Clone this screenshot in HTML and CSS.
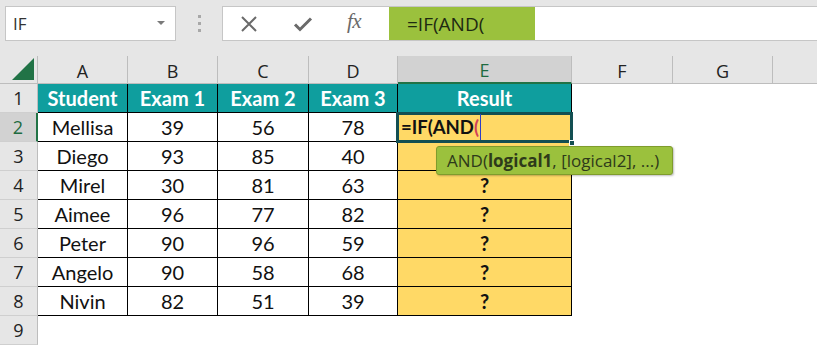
FILE: index.html
```html
<!DOCTYPE html>
<html>
<head>
<meta charset="utf-8">
<link rel="stylesheet" href="styles.css">
</head>
<body>
<div class="topbar">
  <div class="namebox"><span class="nb-text">IF</span><span class="nb-arrow"></span></div>
  <div class="dots"><i></i><i></i><i></i></div>
  <div class="fbar">
    <div class="fbtns">
      <svg class="ic-x" width="18" height="16" viewBox="0 0 18 16"><path d="M2 1 L16 15 M16 1 L2 15" stroke="#6a6a6a" stroke-width="2" fill="none"/></svg>
      <svg class="ic-check" width="20" height="16" viewBox="0 0 20 16"><path d="M2 8.5 L7 13.5 L18 2.5" stroke="#6a6a6a" stroke-width="3" fill="none"/></svg>
      <span class="ic-fx">fx</span>
    </div>
    <div class="fformula">=IF(AND(</div>
  </div>
</div>
<div class="sheet">
  <div class="ch corner"><svg width="22" height="22" viewBox="0 0 22 22"><path d="M22 0 L22 22 L0 22 Z" fill="#217346"/></svg></div>
  <div class="ch">A</div><div class="ch">B</div><div class="ch">C</div><div class="ch">D</div><div class="ch sel">E</div><div class="ch">F</div><div class="ch">G</div><div class="ch last"></div>

  <div class="rh">1</div>
  <div class="c hd">Student</div><div class="c hd">Exam 1</div><div class="c hd">Exam 2</div><div class="c hd">Exam 3</div><div class="c hd">Result</div><div class="e"></div><div class="e"></div><div class="e"></div>

  <div class="rh sel">2</div>
  <div class="c">Mellisa</div><div class="c">39</div><div class="c">56</div><div class="c">78</div><div class="c y active"><span class="ftext">=IF(AND<span class="paren">(</span></span><span class="caret"></span><span class="handle"></span></div><div class="e"></div><div class="e"></div><div class="e"></div>

  <div class="rh">3</div>
  <div class="c">Diego</div><div class="c">93</div><div class="c">85</div><div class="c">40</div><div class="c y"></div><div class="e"></div><div class="e"></div><div class="e"></div>

  <div class="rh">4</div>
  <div class="c">Mirel</div><div class="c">30</div><div class="c">81</div><div class="c">63</div><div class="c y q">?</div><div class="e"></div><div class="e"></div><div class="e"></div>

  <div class="rh">5</div>
  <div class="c">Aimee</div><div class="c">96</div><div class="c">77</div><div class="c">82</div><div class="c y q">?</div><div class="e"></div><div class="e"></div><div class="e"></div>

  <div class="rh">6</div>
  <div class="c">Peter</div><div class="c">90</div><div class="c">96</div><div class="c">59</div><div class="c y q">?</div><div class="e"></div><div class="e"></div><div class="e"></div>

  <div class="rh">7</div>
  <div class="c">Angelo</div><div class="c">90</div><div class="c">58</div><div class="c">68</div><div class="c y q">?</div><div class="e"></div><div class="e"></div><div class="e"></div>

  <div class="rh">8</div>
  <div class="c">Nivin</div><div class="c">82</div><div class="c">51</div><div class="c">39</div><div class="c y q">?</div><div class="e"></div><div class="e"></div><div class="e"></div>

  <div class="rh">9</div>
  <div class="e"></div><div class="e"></div><div class="e"></div><div class="e"></div><div class="e"></div><div class="e"></div><div class="e"></div><div class="e"></div>

  <div class="tip">AND(<b>logical1</b>, [logical2], ...)</div>
</div>
</body>
</html>
```
FILE: styles.css
```css
* { box-sizing: border-box; }
html, body { margin: 0; padding: 0; }
body { width: 817px; height: 345px; overflow: hidden; background: #fff; font-family: "Open Sans", "Noto Sans", sans-serif; }

.topbar { height: 56px; background: #e6e6e6; display: flex; align-items: flex-start; padding-top: 6px; padding-left: 5px; }
.namebox { width: 171px; height: 35px; background: #fff; border: 1px solid #c6c6c6; display: flex; align-items: center; justify-content: space-between; padding: 0 10px 0 7px; }
.nb-text { font-size: 17px; color: #333; }
.nb-arrow { width: 0; height: 0; border-left: 4px solid transparent; border-right: 4px solid transparent; border-top: 4px solid #7a7a7a; margin-top: -2px; }
.dots { width: 46px; height: 35px; display: flex; flex-direction: column; align-items: center; justify-content: center; gap: 4px; }
.dots i { display: block; width: 3px; height: 3px; background: #a8a8a8; }
.fbar { flex: 1; height: 35px; background: #fff; border: 1px solid #c6c6c6; border-right: none; display: flex; }
.fbtns { width: 166px; display: flex; align-items: center; padding-left: 17px; }
.ic-x { margin-right: 35px; }
.ic-check { margin-right: 34px; }
.ic-fx { font-family: "Liberation Serif", serif; font-style: italic; font-size: 21px; color: #6a6a6a; margin-top: -4px; letter-spacing: -0.5px; }
.fformula { width: 146px; background: #9bc13d; font-size: 19px; color: #1e2a12; padding-left: 18px; display: flex; align-items: center; }

.sheet { position: relative; display: grid; grid-template-columns: 38px 90px 90px 91px 89px 174px 101px 100px 1fr; grid-template-rows: 28px repeat(9, 29px); }
.ch { background: #e6e6e6; border-right: 1px solid #bdbdbd; border-bottom: 1px solid #bdbdbd; display: flex; align-items: center; justify-content: center; font-size: 18px; color: #222; padding-top: 2px; }
.ch.last { border-right: none; }
.ch.corner { align-items: flex-end; justify-content: flex-end; padding: 0 3px 3px 0; }
.ch.corner svg { display: block; }
.ch.sel { background: #d2d2d2; border-bottom: 2px solid #217346; color: #1e6b40; }
.rh { background: #e6e6e6; border-right: 1px solid #bdbdbd; border-bottom: 1px solid #cfcfcf; display: flex; align-items: center; justify-content: center; font-size: 18px; color: #222; }
.rh.sel { background: #d2d2d2; border-right: 2px solid #217346; color: #1e6b40; }

.c { border-right: 1px solid #000; border-bottom: 1px solid #000; display: flex; align-items: center; justify-content: center; font-family: "Lato", sans-serif; font-size: 20px; color: #111; }
.c.hd { background: #0f9e9e; color: #fff; font-weight: 700; }
.c.y { background: #ffd966; }
.c.q { font-weight: 700; }
.e { background: #fff; }

.active { position: relative; justify-content: flex-start; padding-left: 3px; }
.active::before { content: ""; position: absolute; left: -2px; top: -1px; right: -2px; bottom: -2px; border: 3px solid #134f52; }
.ftext { font-weight: 700; font-size: 18.5px; position: relative; }
.paren { color: #d0405a; }
.caret { display: block; width: 1px; height: 26px; background: #2d3fc7; margin-left: 1px; position: relative; }
.handle { position: absolute; right: -4px; bottom: -5px; width: 6px; height: 6px; background: #134f52; border: 1px solid #fff; }

.tip { position: absolute; left: 436px; top: 90px; width: 237px; height: 29px; background: #9bc13d; border: 1px solid #7f9c2c; border-radius: 3px; box-shadow: 1px 1px 2px rgba(0,0,0,0.25); font-size: 17px; color: #2e3a1a; display: flex; align-items: center; padding-left: 10px; white-space: nowrap; }
.tip b { font-weight: 700; }
```
